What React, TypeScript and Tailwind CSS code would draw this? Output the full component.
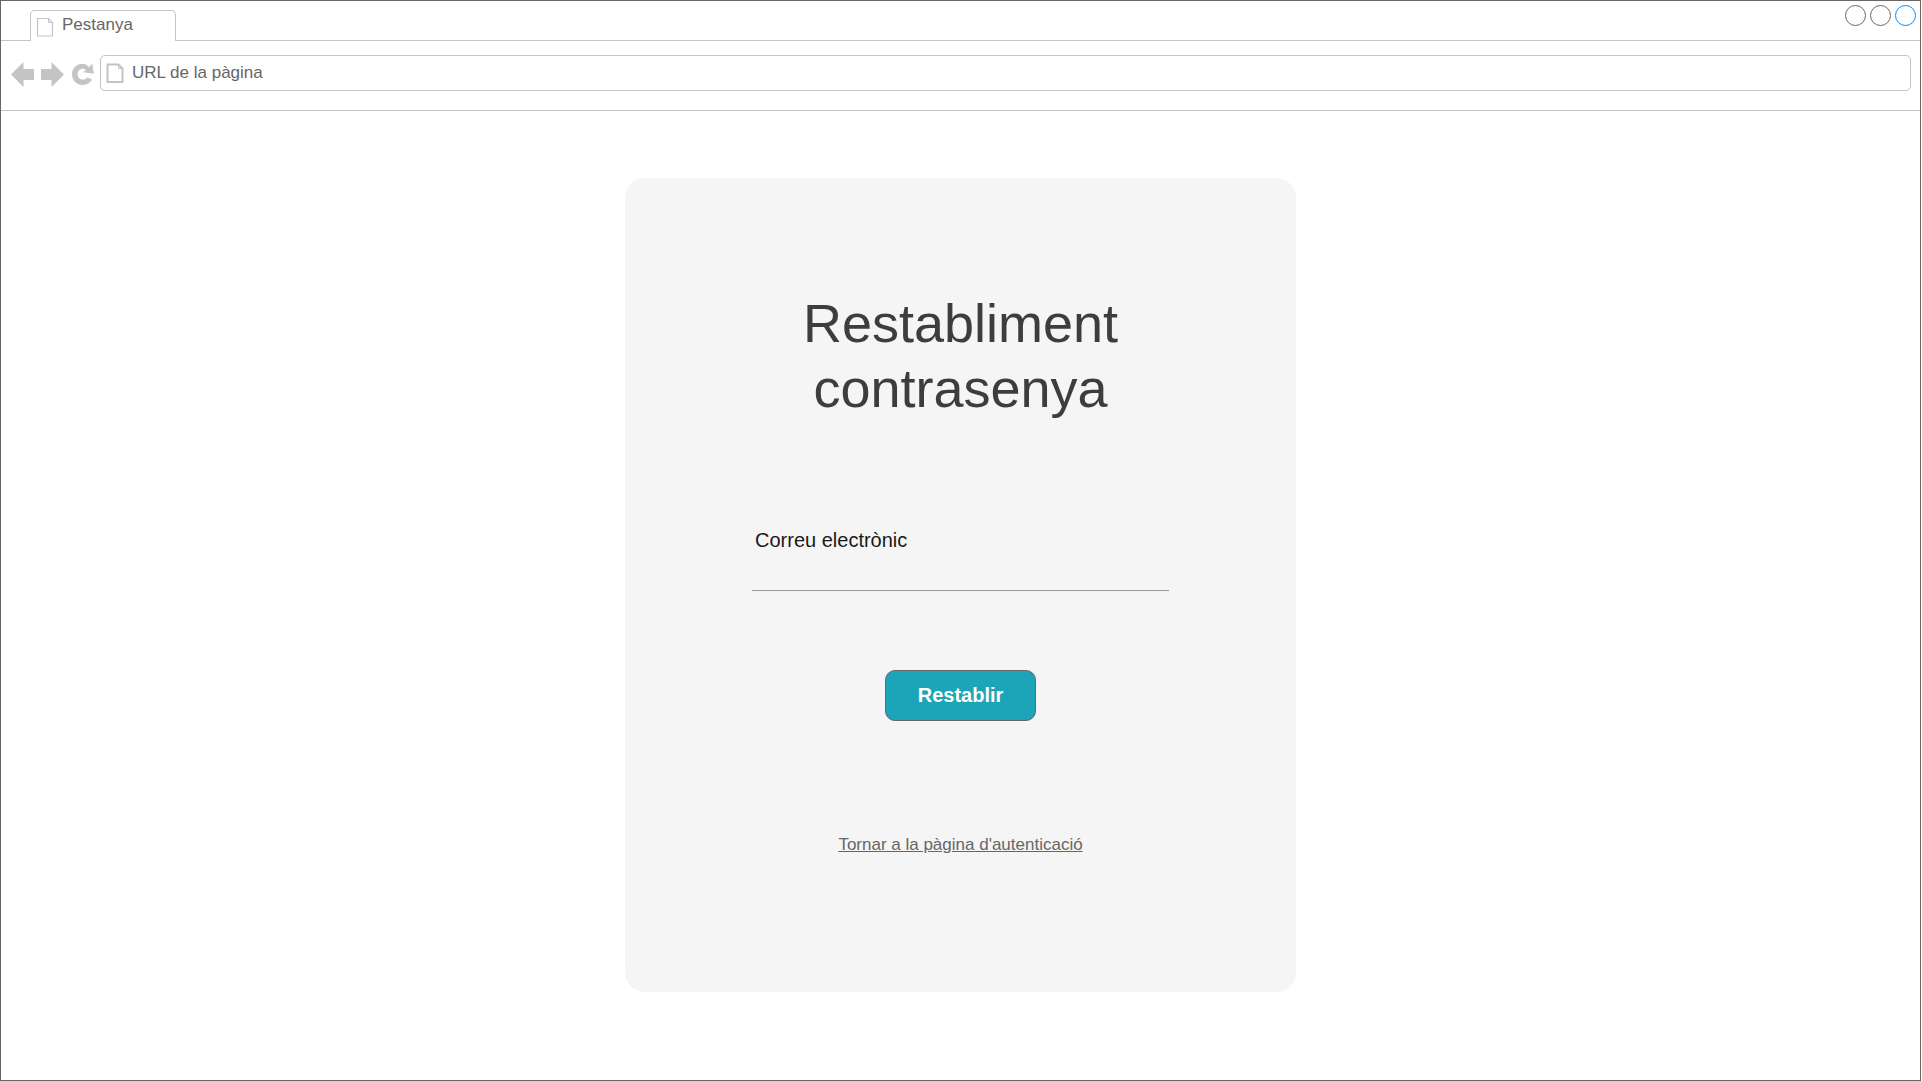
import React from "react";

function PageIcon({ className, stroke }: { className: string; stroke: number }) {
  return (
    <svg className={className} viewBox="0 0 18 20" fill="none" stroke="#c4c4c4" strokeWidth={stroke} aria-hidden="true">
      <path d="M1.5 1.5H12.5L16.5 5.5V19H1.5Z" />
      <path d="M12.5 1.5V5.5H16.5" strokeWidth={1} />
    </svg>
  );
}

function Tab() {
  return (
    <div role="tab" aria-selected="true" className="-mb-px ml-[29px] mt-[9px] flex h-[31px] w-[146px] rounded-t-[5px] border border-b-0 border-[#c4c4c4] bg-white pl-[5px]">
      <PageIcon className="mt-[6px] h-5 w-[18px] shrink-0" stroke={1.2} />
      <span className="ml-2 mt-1 text-[17px] leading-5">Pestanya</span>
    </div>
  );
}

function WindowButtons() {
  return (
    <div className="ml-auto mr-1 mt-1 flex gap-1">
      <button type="button" aria-label="Minimitza" className="size-[21px] rounded-full border border-[#666666]" />
      <button type="button" aria-label="Maximitza" className="size-[21px] rounded-full border border-[#666666]" />
      <button type="button" aria-label="Tanca" className="size-[21px] rounded-full border border-[#008cff]" />
    </div>
  );
}

function Toolbar() {
  return (
    <div className="flex h-[70px] items-start border-b border-[#c4c4c4] pl-[10px] pr-[9px] pt-[14px] text-[#c4c4c4]">
      <button type="button" aria-label="Enrere" className="mt-[7px]">
        <svg width="23" height="25" viewBox="0 0 23 25" fill="currentColor">
          <path d="M0 12.5L12.5 0V7H23V18H12.5V25Z" />
        </svg>
      </button>
      <button type="button" aria-label="Endavant" className="ml-[7px] mt-[7px]">
        <svg width="23" height="25" viewBox="0 0 23 25" fill="currentColor">
          <path d="M23 12.5L10.5 0V7H0V18H10.5V25Z" />
        </svg>
      </button>
      <button type="button" aria-label="Actualitza" className="ml-[8px] mt-2">
        <svg width="22" height="23" viewBox="0 0 22 23" fill="currentColor">
          <path d="M17 4.2L20.2 0.6L21.8 10.8L11.2 9.2L14 6.9C12.8 6.1 11.8 5.8 10.8 5.8C7.8 5.8 5.6 8.1 5.6 11C5.6 14.2 7.9 16.6 11 16.6C12.8 16.6 14.4 15.9 15.5 14.2L20 16.6C18.2 20.2 15 22 11 22C4.8 22 0 17.4 0 11.2C0 5.2 4.8 0.8 10.6 0.8C13.2 0.8 15.3 2.2 17 4.2Z" />
        </svg>
      </button>
      <div className="ml-[6px] flex h-9 flex-1 rounded-[5px] border border-[#c4c4c4] pl-[5px]">
        <PageIcon className="mt-[7px] h-5 w-[18px] shrink-0" stroke={2} />
        <input
          type="text"
          aria-label="Adreça"
          defaultValue="URL de la pàgina"
          className="ml-2 mt-[7px] h-5 min-w-0 flex-1 bg-transparent text-[17px] leading-5 text-[#666666] outline-none"
        />
      </div>
    </div>
  );
}

function ResetForm() {
  return (
    <form
      onSubmit={(e: React.FormEvent) => e.preventDefault()}
      className="flex w-full max-w-[671px] flex-col items-center rounded-[20px] bg-[#f5f5f5] px-6 pb-[137px] pt-[113px]"
    >
      <h1 className="text-center text-[54px] leading-[65px] text-[#3d3d3d]">
        Restabliment
        <br />
        contrasenya
      </h1>
      <div className="mt-[107px] flex w-full max-w-[417px] flex-col">
        <label htmlFor="email" className="pl-[3px] text-xl leading-6 text-[#1a1a1a]">
          Correu electrònic
        </label>
        <input
          id="email"
          type="email"
          className="h-[39px] w-full border-b border-[#999999] bg-transparent px-[3px] text-xl outline-none"
        />
      </div>
      <button
        type="submit"
        className="mt-[79px] h-[51px] w-[151px] rounded-[10px] border border-[#666666] bg-[#1ca5b8] pb-0.5 text-xl font-bold leading-6 text-white"
      >
        Restablir
      </button>
      <a href="#autenticacio" className="mt-[114px] text-[17px] leading-5 underline">
        Tornar a la pàgina d'autenticació
      </a>
    </form>
  );
}

export default function App() {
  return (
    <div className="bg-white pr-px">
      <div className="flex min-h-screen flex-col border border-[#666666] font-['Liberation_Sans',Arial,sans-serif] text-[#666666]">
        <header>
          <div className="flex items-start border-b border-[#c4c4c4]">
            <Tab />
            <WindowButtons />
          </div>
          <Toolbar />
        </header>
        <main className="flex flex-1 flex-col items-center pb-12 pt-[67px]">
          <ResetForm />
        </main>
      </div>
    </div>
  );
}
